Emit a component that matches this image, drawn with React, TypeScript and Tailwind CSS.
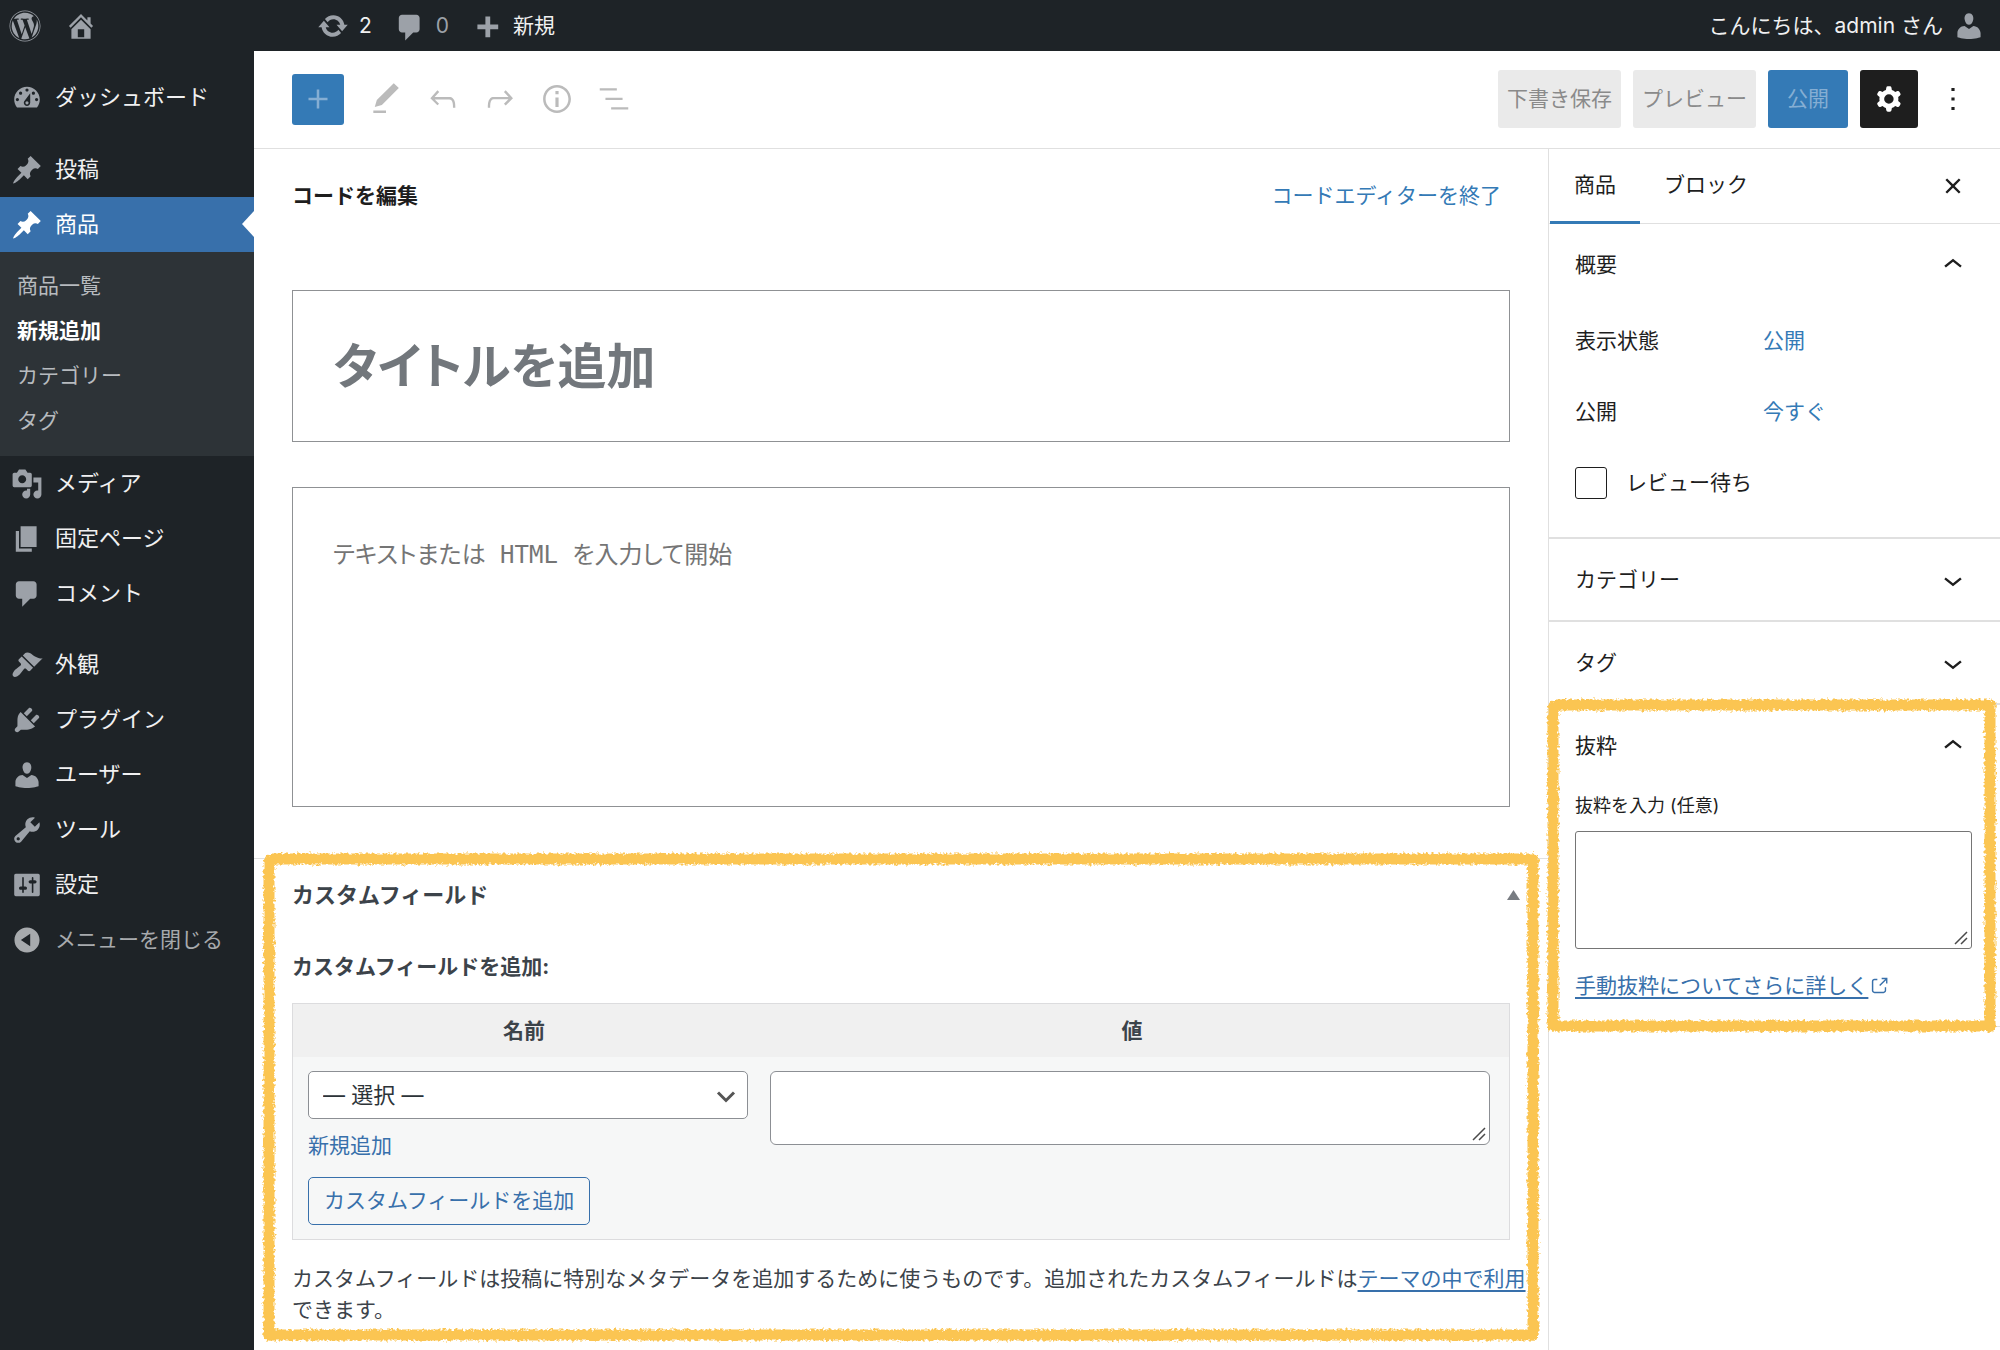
import React from "react";
import { FaWordpress } from "react-icons/fa";

const DASH = {
  home: "M16 8.5l1.53 1.53-1.06 1.06L10 4.6l-6.47 6.49-1.06-1.06L10 2.5l4 4v-2h2v4zm-6-2.46l6 5.99V18H4v-5.97zM12 17v-5H8v5h4z",
  update:
    "M10.2 3.28c3.53 0 6.43 2.61 6.92 6h2.08l-3.5 4-3.5-4h2.32c-.45-1.97-2.21-3.45-4.32-3.45-1.45 0-2.73.71-3.54 1.78L4.95 5.66C6.23 4.2 8.11 3.28 10.2 3.28zm-.4 13.44c-3.52 0-6.43-2.61-6.92-6H.8l3.5-4c1.17 1.33 2.33 2.67 3.5 4H5.48c.45 1.97 2.21 3.45 4.32 3.45 1.45 0 2.73-.71 3.54-1.78l1.71 1.95c-1.28 1.46-3.15 2.38-5.25 2.38z",
  comments: "M5 2h9c1.1 0 2 .9 2 2v7c0 1.1-.9 2-2 2h-2l-5 5v-5H5c-1.1 0-2-.9-2-2V4c0-1.1.9-2 2-2z",
  plus: "M17 7v3h-5v5H9v-5H4V7h5V2h3v5h5z",
  dashboard:
    "M3.76 16h12.48c1.1-1.37 1.76-3.11 1.76-5 0-4.42-3.58-8-8-8s-8 3.58-8 8c0 1.89.66 3.63 1.76 5zM10 4c.55 0 1 .45 1 1s-.45 1-1 1-1-.45-1-1 .45-1 1-1zM6 6c.55 0 1 .45 1 1s-.45 1-1 1-1-.45-1-1 .45-1 1-1zm8 0c.55 0 1 .45 1 1s-.45 1-1 1-1-.45-1-1 .45-1 1-1zm-5.37 5.55L12 7v6c0 1.1-.9 2-2 2s-2-.9-2-2c0-.57.24-1.08.63-1.45zM4 10c.55 0 1 .45 1 1s-.45 1-1 1-1-.45-1-1 .45-1 1-1zm12 0c.55 0 1 .45 1 1s-.45 1-1 1-1-.45-1-1 .45-1 1-1zm-5 3c0-.55-.45-1-1-1s-1 .45-1 1 .45 1 1 1 1-.45 1-1z",
  post: "M10.44 3.02l1.82-1.82 6.36 6.35-1.83 1.82c-1.05-.68-2.48-.57-3.41.36l-.75.75c-.92.93-1.04 2.35-.35 3.41l-1.83 1.82-2.41-2.41-2.8 2.79c-.42.42-3.38 2.71-3.8 2.29s1.86-3.39 2.28-3.81l2.79-2.79L4.1 9.36l1.83-1.82c1.05.69 2.48.57 3.4-.36l.75-.75c.93-.92 1.05-2.35.36-3.41z",
  media:
    "M13 11V4c0-.55-.45-1-1-1h-1.67L9 1H5L3.67 3H2c-.55 0-1 .45-1 1v7c0 .55.45 1 1 1h10c.55 0 1-.45 1-1zM7 4.5c1.38 0 2.5 1.12 2.5 2.5S8.38 9.5 7 9.5 4.5 8.38 4.5 7 5.62 4.5 7 4.5zM14 6h5v10.5c0 1.38-1.12 2.5-2.5 2.5S14 17.88 14 16.5s1.12-2.5 2.5-2.5c.17 0 .34.02.5.05V9h-3V6zm-4 8.05V13h2v3.5c0 1.38-1.12 2.5-2.5 2.5S7 17.88 7 16.5 8.12 14 9.5 14c.17 0 .34.02.5.05z",
  page: "M6 15V2h10v13H6zm-1 1h8v2H3V5h2v11z",
  appearance:
    "M14.48 11.06L7.41 3.99l1.5-1.5c.5-.56 2.3-.47 3.51.32 1.21.8 1.43 1.28 2.91 2.1 1.18.64 2.45 1.26 4.45.85zm-.71.71L6.7 4.7 4.93 6.47c-.39.39-.39 1.02 0 1.41l1.06 1.06c.39.39.39 1.03 0 1.42-.6.6-1.43 1.11-2.21 1.69-.35.26-.7.53-1.01.84C1.43 14.23.4 16.08 1.4 17.07c.99 1 2.84-.03 4.18-1.36.31-.31.58-.66.85-1.02.57-.78 1.08-1.61 1.69-2.21.39-.39 1.02-.39 1.41 0l1.06 1.06c.39.39 1.02.39 1.41 0z",
  plugins:
    "M13.11 4.36L9.87 7.6 8 5.73l3.24-3.24c.35-.34 1.05-.2 1.56.32.52.51.66 1.21.31 1.55zm-8 1.77l.91-1.12 9.01 9.01-1.19.84c-.71.71-2.63 1.16-3.82 1.16H6.14L4.9 17.26c-.59.59-1.54.59-2.12 0-.59-.58-.59-1.53 0-2.12l1.24-1.24v-3.88c0-1.13.4-3.19 1.09-3.89zm7.26 3.97l3.24-3.24c.34-.35 1.04-.21 1.55.31.52.51.66 1.21.31 1.55l-3.24 3.25z",
  users:
    "M10 9.25c-2.27 0-2.73-3.44-2.73-3.44C7 4.02 7.82 2 9.97 2c2.16 0 2.98 2.02 2.71 3.81 0 0-.41 3.44-2.68 3.44zm0 2.57L12.72 10c2.39 0 4.52 2.33 4.52 4.53v2.49s-3.65 1.13-7.24 1.13c-3.65 0-7.24-1.13-7.24-1.13v-2.49c0-2.25 1.94-4.48 4.47-4.48z",
  tools:
    "M16.68 9.77c-1.34 1.34-3.3 1.67-4.95.99l-5.41 6.52c-.99.99-2.59.99-3.58 0s-.99-2.59 0-3.57l6.52-5.42c-.68-1.65-.35-3.61.99-4.95 1.28-1.28 3.12-1.62 4.72-1.06l-2.89 2.89 2.82 2.82 2.86-2.87c.53 1.58.18 3.39-1.08 4.65zM3.81 16.21c.4.39 1.04.39 1.43 0 .4-.4.4-1.04 0-1.43-.39-.4-1.03-.4-1.43 0-.39.39-.39 1.03 0 1.43z",
  settings:
    "M18 16V4c0-.55-.45-1-1-1H3c-.55 0-1 .45-1 1v12c0 .55.45 1 1 1h14c.55 0 1-.45 1-1zM8 11h1c.55 0 1 .45 1 1s-.45 1-1 1H8v1.5c0 .28-.22.5-.5.5s-.5-.22-.5-.5V13H6c-.55 0-1-.45-1-1s.45-1 1-1h1V5.5c0-.28.22-.5.5-.5s.5.22.5.5V11zm5-2h-1c-.55 0-1-.45-1-1s.45-1 1-1h1V5.5c0-.28.22-.5.5-.5s.5.22.5.5V7h1c.55 0 1 .45 1 1s-.45 1-1 1h-1v5.5c0 .28-.22.5-.5.5s-.5-.22-.5-.5V9z",
  collapse:
    "M10 2.16c4.33 0 7.84 3.51 7.84 7.84s-3.51 7.84-7.84 7.84S2.16 14.33 2.16 10 5.67 2.16 10 2.16zm2 11.72V6.12L6.18 10z",
};

const WP = {
  plus: "M18 11.2h-5.2V6h-1.6v5.2H6v1.6h5.2V18h1.6v-5.2H18z",
  edit: "M20.1 5.1L16.9 2 6.2 12.7l-1.3 4.4 4.5-1.3L20.1 5.1zM4 20.8h8v-1.5H4v1.5z",
  undo: "M18.3 11.7c-.6-.6-1.4-.9-2.3-.9H6.7l2.9-3.3-1.1-1-4.5 5L8.5 16l1-1-2.7-2.7H16c.5 0 .9.2 1.3.5 1 1 1 3.4 1 4.5v.3h1.5v-.2c0-1.5 0-4.3-1.5-5.7z",
  redo: "M15.6 6.5l-1.1 1 2.9 3.3H8c-.9 0-1.7.3-2.3.9-1.4 1.5-1.4 4.2-1.4 5.6v.2h1.5v-.3c0-1.1 0-3.5 1-4.5.3-.3.7-.5 1.3-.5h9.2L14.5 15l1.1 1.1 4.6-4.6-4.6-5z",
  info: "M12 3.2c-4.8 0-8.8 3.9-8.8 8.8 0 4.8 3.9 8.8 8.8 8.8 4.8 0 8.8-3.9 8.8-8.8 0-4.8-4-8.8-8.8-8.8zm0 16c-4 0-7.2-3.3-7.2-7.2C4.8 8 8 4.8 12 4.8s7.2 3.3 7.2 7.2c0 4-3.2 7.2-7.2 7.2zM11 17h2v-6h-2v6zm0-8h2V7h-2v2z",
  list: "M13.8 5.2H3v1.5h10.8V5.2zm-3.6 12v1.5H21v-1.5H10.2zm7.2-6H6.6v1.5h10.8v-1.5z",
  cog: "M10.289 4.836A1 1 0 0111.275 4h1.306a1 1 0 01.987.836l.244 1.466c.787.26 1.503.679 2.108 1.218l1.393-.522a1 1 0 011.216.437l.653 1.13a1 1 0 01-.23 1.273l-1.148.944a6.025 6.025 0 010 2.435l1.149.946a1 1 0 01.23 1.272l-.653 1.13a1 1 0 01-1.216.437l-1.394-.522c-.605.54-1.32.958-2.108 1.218l-.244 1.466a1 1 0 01-.987.836h-1.306a1 1 0 01-.986-.836l-.244-1.466a5.995 5.995 0 01-2.108-1.218l-1.394.522a1 1 0 01-1.217-.436l-.653-1.131a1 1 0 01.23-1.272l1.149-.946a6.026 6.026 0 010-2.435l-1.148-.944a1 1 0 01-.23-1.272l.653-1.131a1 1 0 011.217-.437l1.393.522a5.994 5.994 0 012.108-1.218l.244-1.466zM14.929 12a3 3 0 11-6 0 3 3 0 016 0z",
  more: "M13 19h-2v-2h2v2zm0-6h-2v-2h2v2zm0-6h-2V5h2v2z",
  close:
    "M12 13.06l3.712 3.713 1.061-1.06L13.061 12l3.712-3.712-1.06-1.06L12 10.938 8.288 7.227l-1.061 1.06L10.939 12l-3.712 3.712 1.06 1.061L12 13.061z",
  up: "M6.5 12.4L12 8l5.5 4.4-.9 1.2L12 10l-4.5 3.6-1-1.2z",
  down: "M17.5 11.6L12 16l-5.5-4.4.9-1.2L12 14l4.5-3.6 1 1.2z",
  external:
    "M18.2 17c0 .7-.6 1.2-1.2 1.2H7c-.7 0-1.2-.6-1.2-1.2V7c0-.7.6-1.2 1.2-1.2h3.2V4.2H7C5.5 4.2 4.2 5.5 4.2 7v10c0 1.5 1.2 2.8 2.8 2.8h10c1.5 0 2.8-1.2 2.8-2.8v-3.6h-1.5V17zM14.9 3v1.5h3.7l-6.4 6.4 1.1 1.1 6.4-6.4v3.7h1.5V3h-6.3z",
};

function Dash({ name, viewBox = "0 0 20 20" }: { name: keyof typeof DASH; viewBox?: string }) {
  return (
    <svg viewBox={viewBox} className="size-8 shrink-0 fill-current" fillRule="evenodd" aria-hidden="true">
      <path d={DASH[name]} />
    </svg>
  );
}

function Icon({ name, className = "size-[38px]" }: { name: keyof typeof WP; className?: string }) {
  return (
    <svg viewBox="0 0 24 24" className={`${className} shrink-0 fill-current`} fillRule="evenodd" aria-hidden="true">
      <path d={WP[name]} />
    </svg>
  );
}

/* Crayon-like frame drawn round a panel. */
function Marker({ id, className }: { id: string; className: string }) {
  return (
    <svg className={`pointer-events-none absolute overflow-visible ${className}`} width="100%" height="100%" aria-hidden="true">
      <filter id={id} x="-5%" y="-5%" width="110%" height="110%" colorInterpolationFilters="sRGB">
        <feTurbulence type="fractalNoise" baseFrequency="0.35" numOctaves="2" seed="4" result="n" />
        <feDisplacementMap in="SourceGraphic" in2="n" scale="6" xChannelSelector="R" yChannelSelector="G" />
      </filter>
      <g filter={`url(#${id})`} stroke="#fbc552" strokeWidth="11" strokeLinecap="round">
        <line x1="2" y1="0" x2="100%" y2="0" />
        <line x1="0" y1="2" x2="0" y2="100%" />
        <line x1="100%" y1="0" x2="100%" y2="100%" />
        <line x1="0" y1="100%" x2="100%" y2="100%" />
      </g>
    </svg>
  );
}

/* Diagonal resize handle in the lower right corner of a text area. */
function Grip() {
  return (
    <svg viewBox="0 0 14 14" className="pointer-events-none absolute right-[4px] bottom-[4px] size-[14px]" aria-hidden="true">
      <path d="M1 13L13 1M7 13l6-6" fill="none" stroke="#4a4a4a" strokeWidth="1.5" />
    </svg>
  );
}

function MenuItem({ icon, label, active }: { icon: keyof typeof DASH; label: string; active?: boolean }) {
  return (
    <a
      href="#"
      className={
        active
          ? "relative flex h-[55px] items-center gap-3 bg-[#3870ab] pl-[11px] text-[22px] text-white"
          : "flex h-[55px] items-center gap-3 pl-[11px] text-[22px] text-[#f0f0f1]"
      }
    >
      <span className={active ? "text-white" : "text-[#9ca1a8]"}>
        <Dash name={icon} />
      </span>
      {label}
      {active && (
        <span className="absolute top-[14px] right-0 border-y-[13px] border-r-[12px] border-y-transparent border-r-white" />
      )}
    </a>
  );
}

function AdminBar() {
  return (
    <header className="flex h-[51px] items-center bg-[#1e2327] pr-[15px] pl-[9px] text-[21px] text-[#f0f0f1]">
      <a href="#" aria-label="WordPress" className="text-[#9ca1a8]">
        <FaWordpress className="size-8" />
      </a>
      <a href="#" aria-label="サイト" className="ml-6 text-[#9ca1a8]">
        <Dash name="home" />
      </a>
      <a href="#" className="ml-[220px] flex items-center gap-[10px]">
        <span className="text-[#9ca1a8]">
          <Dash name="update" />
        </span>
        2
      </a>
      <a href="#" className="ml-[22px] flex items-center gap-[10px] text-[#9ca1a8]">
        <Dash name="comments" viewBox="0 -1 20 20" />0
      </a>
      <a href="#" className="ml-[22px] flex items-center gap-[10px]">
        <span className="text-[#9ca1a8]">
          <Dash name="plus" viewBox="0 -2 20 20" />
        </span>
        新規
      </a>
      <a href="#" className="ml-auto flex items-center gap-[10px]">
        こんにちは、admin さん
        <span className="text-[#9ca1a8]">
          <Dash name="users" />
        </span>
      </a>
    </header>
  );
}

function AdminMenu() {
  return (
    <nav className="w-[254px] shrink-0 bg-[#1e2327] pt-[19px]">
      <MenuItem icon="dashboard" label="ダッシュボード" />
      <div className="mt-[17px]">
        <MenuItem icon="post" label="投稿" />
        <MenuItem icon="post" label="商品" active />
      </div>
      <ul className="bg-[#2d3337] pt-[11px] pb-[13px] text-[21px] leading-[45px] text-[#b7bbbf]">
        <li><a href="#" className="block pl-[17px]">商品一覧</a></li>
        <li><a href="#" className="block pl-[17px] font-bold text-white">新規追加</a></li>
        <li><a href="#" className="block pl-[17px]">カテゴリー</a></li>
        <li><a href="#" className="block pl-[17px]">タグ</a></li>
      </ul>
      <MenuItem icon="media" label="メディア" />
      <MenuItem icon="page" label="固定ページ" />
      <MenuItem icon="comments" label="コメント" />
      <div className="mt-4">
        <MenuItem icon="appearance" label="外観" />
        <MenuItem icon="plugins" label="プラグイン" />
        <MenuItem icon="users" label="ユーザー" />
        <MenuItem icon="tools" label="ツール" />
        <MenuItem icon="settings" label="設定" />
      </div>
      <button type="button" className="flex h-[55px] items-center gap-3 pl-[11px] text-[21px] text-[#a7aaad]">
        <Dash name="collapse" />
        メニューを閉じる
      </button>
    </nav>
  );
}

function Tool({ name, label }: { name: keyof typeof WP; label: string }) {
  return (
    <button type="button" aria-label={label} className="flex h-[58px] w-[57px] items-center justify-center text-[#bbbbbb]">
      <Icon name={name} />
    </button>
  );
}

function EditorHeader() {
  return (
    <div className="flex h-[98px] items-center border-b border-[#e0e0e0] pr-6 pb-px pl-[38px]">
      <button
        type="button"
        aria-label="ブロック挿入"
        className="mr-[13px] flex h-[51px] w-[52px] items-center justify-center rounded-[3px] bg-[#347ab6] text-[#85aed3]"
      >
        <Icon name="plus" />
      </button>
      <Tool name="edit" label="ツール" />
      <Tool name="undo" label="元に戻す" />
      <Tool name="redo" label="やり直し" />
      <Tool name="info" label="詳細" />
      <Tool name="list" label="リスト表示" />
      <div className="ml-auto flex items-center gap-3 text-[21px]">
        <button type="button" className="h-[58px] rounded-[3px] bg-[#eaeaea] px-[9px] text-[#8a8a8a]">下書き保存</button>
        <button type="button" className="h-[58px] rounded-[3px] bg-[#eaeaea] px-[9px] text-[#8a8a8a]">プレビュー</button>
        <button type="button" className="h-[58px] rounded-[3px] bg-[#347ab6] px-[19px] text-[#85aed3]">公開</button>
        <button type="button" aria-label="設定" className="flex size-[58px] items-center justify-center rounded-[3px] bg-[#1e1e1e] text-white">
          <Icon name="cog" />
        </button>
        <button type="button" aria-label="オプション" className="flex h-[58px] w-[46px] items-center justify-center text-[#1e1e1e]">
          <Icon name="more" />
        </button>
      </div>
    </div>
  );
}

function CustomFields() {
  return (
    <section className="relative mt-[51px] border-t border-[#e0e0e0] px-[38px] pb-[10px] text-[#3c434a]">
      <div className="flex h-[72px] items-center justify-between">
        <h2 className="text-[22px] font-bold">カスタムフィールド</h2>
        <button type="button" aria-label="パネルを切り替え" className="-mr-[10px] text-[#787c82]">
          <svg viewBox="0 0 13 10" className="h-[10px] w-[13px] fill-current" aria-hidden="true">
            <path d="M0 10L6.5 0 13 10z" />
          </svg>
        </button>
      </div>
      <p className="flex h-[72px] items-center text-[21px] font-bold">カスタムフィールドを追加:</p>
      <div className="border border-[#dcdcde] bg-[#f6f7f7]">
        <table className="w-full table-fixed text-[21px]">
          <colgroup>
            <col className="w-[38%]" />
            <col />
          </colgroup>
          <thead>
            <tr className="h-[53px] bg-[#f0f0f0]">
              <th id="meta-name" className="font-bold">名前</th>
              <th id="meta-value" className="font-bold">値</th>
            </tr>
          </thead>
          <tbody>
            <tr>
              <td className="py-[14px] pr-[7px] pl-[15px] align-top">
                <div className="relative">
                  <select
                    aria-labelledby="meta-name"
                    className="block h-12 w-full appearance-none rounded-[5px] border border-[#8c8f94] bg-white pl-[14px] text-[22px] text-[#2c3338]"
                  >
                    <option>— 選択 —</option>
                  </select>
                  <svg viewBox="0 0 20 12" className="pointer-events-none absolute top-[20px] right-[12px] h-[12px] w-[20px]" aria-hidden="true">
                    <path d="M2 1.5l8 8 8-8" fill="none" stroke="#555" strokeWidth="3" />
                  </svg>
                </div>
                <a href="#" className="mt-[11px] block leading-[31px] text-[#3870ab]">新規追加</a>
                <button type="button" className="mt-4 block h-12 rounded-[5px] border border-[#3870ab] px-[15px] text-[#3870ab]">
                  カスタムフィールドを追加
                </button>
              </td>
              <td className="py-[14px] pr-[19px] pl-[15px] align-top">
                <div className="relative">
                  <textarea aria-labelledby="meta-value" className="block h-[74px] w-full resize-none rounded-[6px] border border-[#8c8f94] bg-white" />
                  <Grip />
                </div>
              </td>
            </tr>
          </tbody>
        </table>
      </div>
      <p className="-mr-4 mt-[23px] text-[21px] leading-[31px]">
        カスタムフィールドは投稿に特別なメタデータを追加するために使うものです。追加されたカスタムフィールドは
        <a href="#" className="text-[#3870ab] underline decoration-2 underline-offset-4">テーマの中で利用</a>
        <br />
        できます。
      </p>
      <Marker id="marker-fields" className="inset-0 mx-[15px] w-[calc(100%-30px)]" />
    </section>
  );
}

function PanelTitle({ label, open }: { label: string; open?: boolean }) {
  return (
    <h2>
      <button type="button" aria-expanded={!!open} className="flex h-[81px] w-full items-center justify-between">
        {label}
        <Icon name={open ? "up" : "down"} />
      </button>
    </h2>
  );
}

function Settings() {
  return (
    <aside className="w-[452px] shrink-0 border-l border-[#e0e0e0] text-[21px] text-[#1e1e1e]">
      <div className="flex h-[75px] items-stretch border-b border-[#e0e0e0] pr-7 pl-px">
        <button type="button" className="-mb-px border-b-[3px] border-[#347ab6] px-6">商品</button>
        <button type="button" className="-mb-px border-b-[3px] border-transparent px-6">ブロック</button>
        <button type="button" aria-label="設定を閉じる" className="ml-auto">
          <Icon name="close" />
        </button>
      </div>
      <section className="border-b-2 border-[#e0e0e0] pr-7 pb-[19px] pl-[26px]">
        <PanelTitle label="概要" open />
        <div className="flex h-[71px] items-center">
          <span className="w-[188px]">表示状態</span>
          <button type="button" className="text-[#347ab6]">公開</button>
        </div>
        <div className="flex h-[71px] items-center">
          <span className="w-[188px]">公開</span>
          <button type="button" className="text-[#347ab6]">今すぐ</button>
        </div>
        <label className="flex h-[71px] items-center gap-[19px]">
          <input type="checkbox" className="size-8 appearance-none rounded-[3px] border border-[#1e1e1e] bg-white" />
          レビュー待ち
        </label>
      </section>
      <section className="border-b-2 border-[#e0e0e0] pr-7 pl-[26px]">
        <PanelTitle label="カテゴリー" />
      </section>
      <section className="border-b-2 border-[#e0e0e0] pr-7 pl-[26px]">
        <PanelTitle label="タグ" />
      </section>
      <section className="relative border-b border-[#e0e0e0] pr-7 pb-[25px] pl-[26px]">
        <PanelTitle label="抜粋" open />
        <label htmlFor="excerpt" className="block text-[18px] leading-10">抜粋を入力 (任意)</label>
        <div className="relative mt-[5px]">
          <textarea id="excerpt" className="block h-[118px] w-full resize-none rounded-[3px] border border-[#757575] bg-white" />
          <Grip />
        </div>
        <a href="#" className="mt-[21px] flex items-center leading-[31px] text-[#3870ab]">
          <span className="underline decoration-2 underline-offset-4">手動抜粋についてさらに詳しく</span>
          <Icon name="external" className="size-[22px]" />
        </a>
        <Marker id="marker-excerpt" className="inset-0 mr-[10px] ml-[4px] w-[calc(100%-14px)]" />
      </section>
    </aside>
  );
}

export default function App() {
  return (
    <div lang="ja" className="flex min-h-screen flex-col bg-white font-['Inter','Noto_Sans_CJK_JP',sans-serif]">
      <AdminBar />
      <div className="flex flex-1">
        <AdminMenu />
        <div className="flex min-w-0 flex-1 flex-col">
          <EditorHeader />
          <div className="flex flex-1">
            <main className="min-w-0 flex-1">
              <div className="px-[38px]">
                <div className="flex h-[94px] items-center justify-between pr-[9px] text-[21px]">
                  <h2 className="font-bold text-[#1e1e1e]">コードを編集</h2>
                  <button type="button" className="text-[#347ab6]">コードエディターを終了</button>
                </div>
                <input
                  type="text"
                  aria-label="タイトルを追加"
                  placeholder="タイトルを追加"
                  className="mt-[47px] block h-[152px] w-full border border-[#8f9194] px-10 text-[49px] font-bold [font-feature-settings:'palt'] placeholder:text-[#72777c]"
                />
                <textarea
                  aria-label="テキストまたは HTML を入力して開始"
                  placeholder="テキストまたは HTML を入力して開始"
                  className="mt-[45px] block h-[320px] w-full resize-none border border-[#8f9194] px-10 py-[49px] font-['DejaVu_Sans_Mono','Noto_Sans_CJK_JP',monospace] text-[24px] leading-9 [font-feature-settings:'palt'] placeholder:text-[#757575]"
                />
              </div>
              <CustomFields />
            </main>
            <Settings />
          </div>
        </div>
      </div>
    </div>
  );
}
